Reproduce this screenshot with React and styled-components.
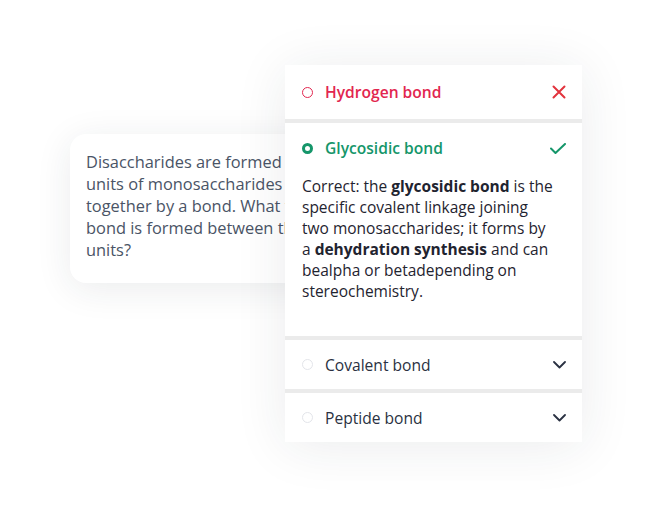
import React from 'react';
import styled, { createGlobalStyle } from 'styled-components';

const GlobalStyle = createGlobalStyle`
  body {
    margin: 0;
    background: #ffffff;
    font-family: "Open Sans", Lato, sans-serif;
    -webkit-font-smoothing: antialiased;
  }
`;

const Stage = styled.div`
  position: relative;
  width: 652px;
  height: 516px;
  overflow: hidden;
  padding: 134px 0 0 70px;
  box-sizing: border-box;
`;

const QuestionCard = styled.div`
  width: 250px;
  height: 149px;
  box-sizing: border-box;
  padding: 17px 0 17px 16px;
  background: #ffffff;
  border-radius: 16px;
  box-shadow: 0 6px 36px rgba(30, 40, 60, 0.09);
`;

const QuestionText = styled.p`
  margin: 0;
  width: 199px;
  overflow: hidden;
  color: #4a5466;
  font-size: 16.4px;
  line-height: 22px;
  white-space: nowrap;
`;

const Accordion = styled.div`
  position: absolute;
  left: 285px;
  top: 65px;
  width: 297px;
  display: flex;
  flex-direction: column;
  gap: 4px;
  background: #ebebeb;
  box-shadow: 0 4px 50px rgba(30, 40, 60, 0.09);
`;

const Item = styled.div`
  background: #ffffff;
  display: flex;
  flex-direction: column;
`;

const Header = styled.div`
  height: ${({ $h }) => $h}px;
  padding: 0 16px 0 17px;
  display: flex;
  align-items: center;
  gap: 12px;
  box-sizing: border-box;
`;

const Dot = styled.span`
  width: 11px;
  height: 11px;
  border-radius: 50%;
  box-sizing: border-box;
  border: ${({ $w }) => $w}px solid ${({ $c }) => $c};
  flex: none;
`;

const Label = styled.span`
  flex: 1;
  font-size: 15.6px;
  font-weight: ${({ $bold }) => ($bold ? 600 : 400)};
  color: ${({ $c }) => $c};
`;

const Body = styled.div`
  padding: 0 16px 34px 17px;
  margin-top: 3px;
  font-size: 15.5px;
  line-height: 21px;
  color: #1f2430;
  white-space: nowrap;

  b {
    font-weight: 700;
  }
`;

const RED = '#e2264f';
const GREEN = '#15966a';
const INK = '#2a3142';

const Cross = () => (
  <svg width="14" height="14" viewBox="0 0 14 14">
    <path d="M1.5 1.5L12.5 12.5M12.5 1.5L1.5 12.5" stroke="#e2333d" strokeWidth="2" strokeLinecap="round" />
  </svg>
);

const Check = () => (
  <svg width="16" height="11" viewBox="0 0 16 11">
    <path d="M1 5.5L5.5 10L15 1" stroke={GREEN} strokeWidth="2" fill="none" strokeLinecap="round" strokeLinejoin="round" />
  </svg>
);

const Chevron = () => (
  <svg width="13" height="8" viewBox="0 0 13 8">
    <path d="M1 1L6.5 6.5L12 1" stroke={INK} strokeWidth="1.8" fill="none" strokeLinecap="round" strokeLinejoin="round" />
  </svg>
);

export default function App() {
  return (
    <>
      <GlobalStyle />
      <Stage>
        <QuestionCard>
          <QuestionText>
            Disaccharides are formed from two<br />
            units of monosaccharides joined<br />
            together by a bond. What type of<br />
            bond is formed between these<br />
            units?
          </QuestionText>
        </QuestionCard>

        <Accordion>
          <Item>
            <Header $h={54}>
              <Dot $w={1.5} $c={RED} />
              <Label $bold $c={RED}>Hydrogen bond</Label>
              <Cross />
            </Header>
          </Item>

          <Item>
            <Header $h={50}>
              <Dot $w={3} $c={GREEN} />
              <Label $bold $c={GREEN}>Glycosidic bond</Label>
              <Check />
            </Header>
            <Body>
              Correct: the <b>glycosidic bond</b> is the<br />
              specific covalent linkage joining<br />
              two monosaccharides; it forms by<br />
              a <b>dehydration synthesis</b> and can<br />
              bealpha or betadepending on<br />
              stereochemistry.
            </Body>
          </Item>

          <Item>
            <Header $h={49}>
              <Dot $w={1} $c="#e3e5ea" />
              <Label $c={INK}>Covalent bond</Label>
              <Chevron />
            </Header>
          </Item>

          <Item>
            <Header $h={49}>
              <Dot $w={1} $c="#e3e5ea" />
              <Label $c={INK}>Peptide bond</Label>
              <Chevron />
            </Header>
          </Item>
        </Accordion>
      </Stage>
    </>
  );
}
